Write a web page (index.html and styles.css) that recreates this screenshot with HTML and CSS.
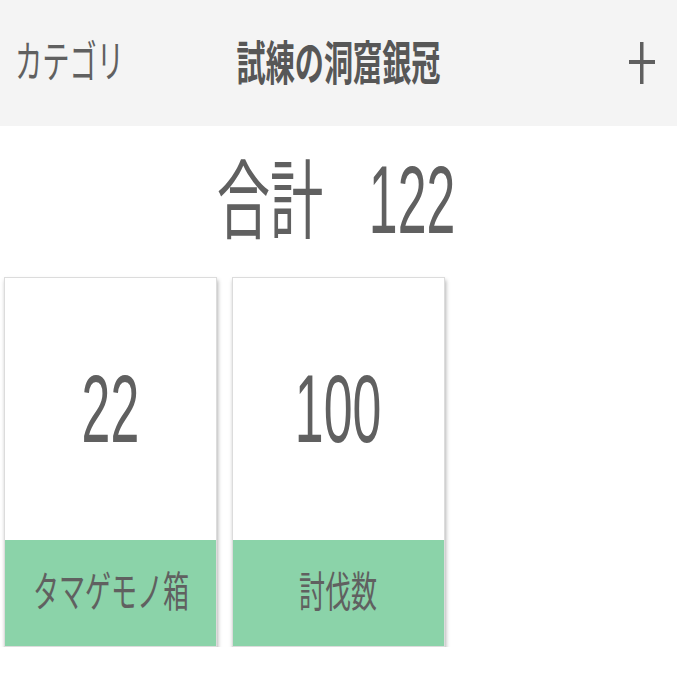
FILE: index.html
```html
<!DOCTYPE html>
<html lang="ja">
<head>
    <meta charset="UTF-8">
    <meta name="viewport" content="width=device-width, initial-scale=1.0">
    <title>試練の洞窟銀冠</title>
    <link rel="stylesheet" href="styles.css">
</head>
<body>
    <header class="top-bar">
        <div class="top-left"><span class="narrow category-link">カテゴリ</span></div>
        <h1 class="top-title"><span class="narrow">試練の洞窟銀冠</span></h1>
        <div class="top-right">
            <svg class="add-icon" width="26" height="42" viewBox="0 0 26 42">
                <rect x="11" y="0" width="3.5" height="42" fill="#5f5f5f"/>
                <rect x="0" y="18" width="26" height="4" fill="#5f5f5f"/>
            </svg>
        </div>
    </header>

    <div class="total">
        <span class="narrow total-label">合計</span>
        <span class="narrow num">122</span>
    </div>

    <!-- counters -->
    <div class="cards">
        <div class="card">
            <div class="card-count"><span class="narrow num">22</span></div>
            <div class="card-label"><span class="narrow">タマゲモノ箱</span></div>
        </div>
        <div class="card">
            <div class="card-count"><span class="narrow num">100</span></div>
            <div class="card-label"><span class="narrow">討伐数</span></div>
        </div>
    </div>
</body>
</html>
```

FILE: styles.css
```css
body {
    margin: 0;
    background: #fff;
    color: #606060;
    font-family: "Liberation Sans", "Noto Sans CJK JP", sans-serif;
}
.narrow {
    display: inline-block;
    transform: scaleX(0.62);
    white-space: nowrap;
}
.num {
    font-size: 96px;
    transform: scaleX(0.54);
}
.top-bar {
    display: grid;
    grid-template-columns: minmax(0, 1fr) auto minmax(0, 1fr);
    align-items: center;
    height: 126px;
    background: #f4f4f4;
}
.top-left {
    padding-left: 15px;
    font-size: 44px;
    line-height: 1;
    white-space: nowrap;
}
.category-link {
    transform-origin: left center;
}
.top-title {
    margin: 0;
    font-size: 47px;
    font-weight: bold;
    line-height: 1;
    color: #575757;
}
.top-right {
    display: flex;
    justify-content: flex-end;
    padding-right: 22px;
}
.add-icon {
    display: block;
}
.total {
    height: 151px;
    display: flex;
    align-items: center;
    justify-content: center;
    font-size: 86px;
    line-height: 1;
}
.total-label {
    margin-right: -20px;
}
.total .num {
    margin-left: -4px;
    position: relative;
    top: -2px;
}
.cards {
    display: flex;
    gap: 15px;
    padding-left: 4px;
}
.card {
    width: 213px;
    border: 1px solid #dcdcdc;
    box-sizing: border-box;
    box-shadow: 1px 3px 4px rgba(0, 0, 0, 0.3);
    background: #fff;
}
.card-count {
    height: 262px;
    display: flex;
    align-items: center;
    justify-content: center;
    line-height: 1;
}
.card-label {
    height: 106px;
    display: flex;
    align-items: center;
    justify-content: center;
    background: #8bd3a9;
    font-size: 42px;
    line-height: 1;
}
```
